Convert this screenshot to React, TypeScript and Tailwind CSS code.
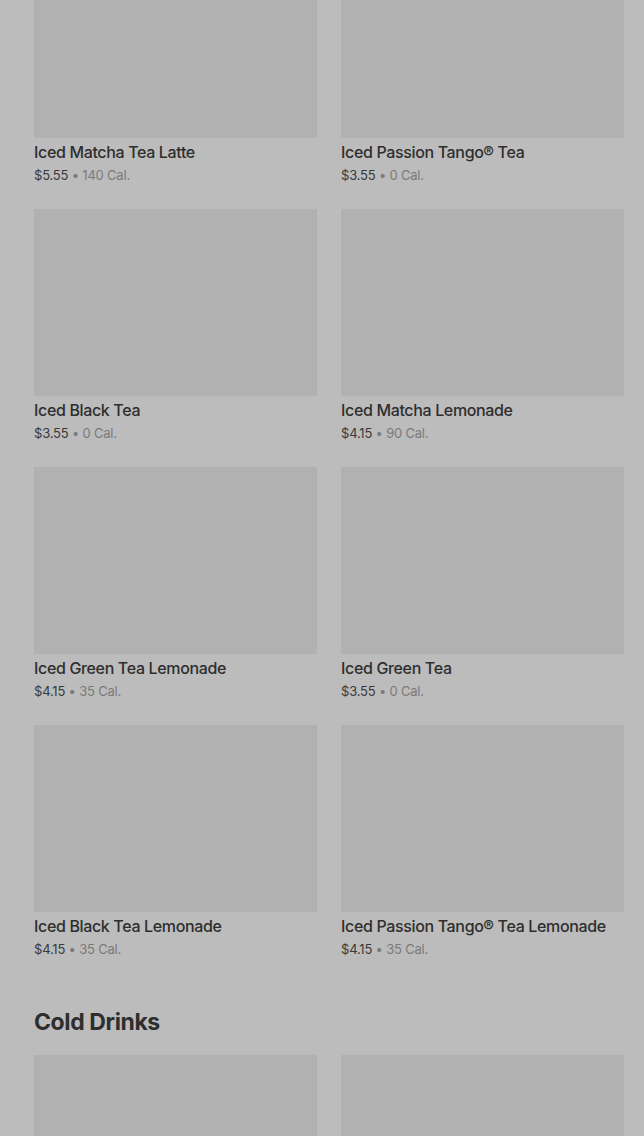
import { FC } from "react";

type Drink = {
  id: number;
  name: string;
  price: string;
  cal: string;
};

const teas: Drink[] = [
  { id: 1, name: "Iced Matcha Tea Latte", price: "$5.55", cal: "140 Cal." },
  { id: 2, name: "Iced Passion Tango® Tea", price: "$3.55", cal: "0 Cal." },
  { id: 3, name: "Iced Black Tea", price: "$3.55", cal: "0 Cal." },
  { id: 4, name: "Iced Matcha Lemonade", price: "$4.15", cal: "90 Cal." },
  { id: 5, name: "Iced Green Tea Lemonade", price: "$4.15", cal: "35 Cal." },
  { id: 6, name: "Iced Green Tea", price: "$3.55", cal: "0 Cal." },
  { id: 7, name: "Iced Black Tea Lemonade", price: "$4.15", cal: "35 Cal." },
  { id: 8, name: "Iced Passion Tango® Tea Lemonade", price: "$4.15", cal: "35 Cal." },
];

const DrinkCard: FC<{ drink: Drink; cut?: boolean }> = ({ drink, cut }) => {
  return (
    <article className="flex flex-col pb-[25px]">
      <div className={`h-[187px] bg-[#b1b1b1] ${cut ? "-mt-[49px]" : ""}`} />
      <h3 className="mt-1 text-[16px] leading-5 font-medium text-[#2e2e2e] tracking-[-0.35px]">
        {drink.name}
      </h3>
      <p className="mt-1 text-[13px] leading-[18px] text-[#3a3a3a] tracking-[-0.2px]">
        {drink.price}
        <span className="text-[#7a7a7a]"> • {drink.cal}</span>
      </p>
    </article>
  );
};

const App: FC = () => {
  return (
    <main
      className="min-h-[1136px] bg-[#bcbcbc] pl-[34px] pr-[20px] overflow-hidden"
      style={{ fontFamily: "Inter, 'Noto Sans', sans-serif" }}
    >
      <div className="grid grid-cols-2 gap-x-6">
        {teas.map((t) => (
          <DrinkCard key={t.id} drink={t} cut={t.id <= 2} />
        ))}
      </div>
      <h2 className="mt-[25px] text-[23px] leading-7 font-bold text-[#2e2e2e] tracking-[-0.4px]">
        Cold Drinks
      </h2>
      <div className="mt-[19px] grid grid-cols-2 gap-x-6">
        <div className="h-[187px] bg-[#b1b1b1]" />
        <div className="h-[187px] bg-[#b1b1b1]" />
      </div>
    </main>
  );
};

export default App;
